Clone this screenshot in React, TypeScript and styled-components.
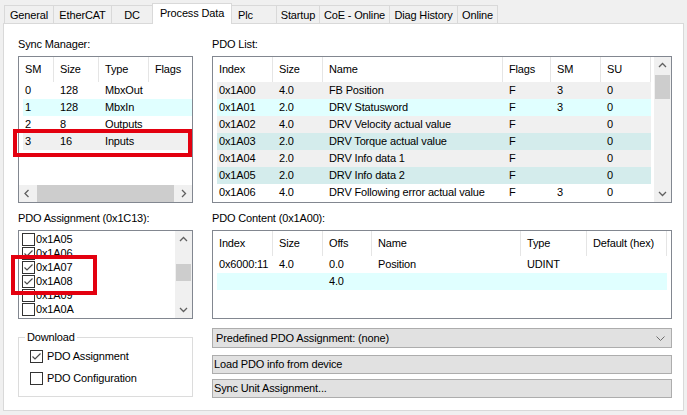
import React from "react";
import styled, { createGlobalStyle } from "styled-components";

const GlobalStyle = createGlobalStyle`
  * { box-sizing: border-box; }
  html, body { margin: 0; padding: 0; background: #f0f0f0; }
  body {
    font-family: "Liberation Sans", Arial, sans-serif;
    font-size: 11px;
    letter-spacing: -0.15px;
    color: #000;
  }
`;

const Window = styled.div`
  width: 687px;
  height: 415px;
  padding: 3px 0 0 3px;
  overflow: hidden;
`;

const Frame = styled.div`
  width: 681px;
`;

const TabStrip = styled.div`
  display: flex;
  align-items: flex-end;
  height: 21px;
  padding-left: 1px;
  border-bottom: 1px solid #d9d9d9;
`;

const Tab = styled.div<{ $w: number; $active?: boolean; $left?: boolean }>`
  width: ${(p) => p.$w}px;
  height: ${(p) => (p.$active ? 21 : 18)}px;
  margin-bottom: ${(p) => (p.$active ? -1 : 0)}px;
  border: 1px solid #d9d9d9;
  border-bottom: none;
  background: ${(p) => (p.$active ? "#fff" : "#f0f0f0")};
  line-height: ${(p) => (p.$active ? 19 : 18)}px;
  text-align: ${(p) => (p.$left ? "left" : "center")};
  padding-left: ${(p) => (p.$left ? 6 : 0)}px;
  white-space: nowrap;
  position: relative;
  z-index: ${(p) => (p.$active ? 1 : 0)};
  & + & {
    margin-left: -1px;
  }
`;

const Panel = styled.div`
  height: 387px;
  border: 1px solid #d9d9d9;
  border-top: none;
  background: #fff;
  padding: 14px 0 0 14px;
  display: grid;
  grid-template-columns: 175px 460px;
  column-gap: 19px;
  align-items: start;
`;

const Column = styled.div`
  display: flex;
  flex-direction: column;
`;

const Label = styled.div<{ $top?: number }>`
  height: 18px;
  line-height: 13px;
  margin-top: ${(p) => p.$top ?? 0}px;
  white-space: nowrap;
`;

const Holder = styled.div`
  position: relative;
`;

const ListBox = styled.div<{ $h: number }>`
  height: ${(p) => p.$h}px;
  border: 1px solid #828790;
  background: #fff;
  display: flex;
  overflow: hidden;
`;

const ListMain = styled.div`
  flex: 1;
  min-width: 0;
  display: flex;
  flex-direction: column;
  overflow: hidden;
`;

const ListRows = styled.div<{ $pad?: number }>`
  flex: 1;
  overflow: hidden;
  padding-top: ${(p) => p.$pad ?? 0}px;
`;

const HeaderRow = styled.div<{ $cols: string }>`
  display: grid;
  grid-template-columns: ${(p) => p.$cols};
  width: max-content;
  margin-left: 4px;
  height: 25px;
  flex-shrink: 0;
`;

const HeadCell = styled.div`
  border-right: 1px solid #e5e5e5;
  padding-left: 6px;
  line-height: 25px;
  white-space: nowrap;
  overflow: hidden;
  &:first-child {
    padding-left: 2px;
  }
`;

const Row = styled.div<{ $cols: string; $bg: string }>`
  display: grid;
  grid-template-columns: ${(p) => p.$cols};
  width: max-content;
  margin-left: 4px;
  height: 17px;
  line-height: 17px;
  background: ${(p) => p.$bg};
`;

const Cell = styled.div`
  padding-left: 6px;
  white-space: nowrap;
  overflow: hidden;
  &:first-child {
    padding-left: 2px;
  }
`;

const VScroll = styled.div`
  width: 17px;
  flex-shrink: 0;
  background: #f0f0f0;
  display: flex;
  flex-direction: column;
`;

const HScroll = styled.div`
  height: 17px;
  flex-shrink: 0;
  background: #f0f0f0;
  display: flex;
`;

const Arrow = styled.div`
  width: 17px;
  height: 17px;
  flex-shrink: 0;
  display: flex;
  align-items: center;
  justify-content: center;
`;

const Track = styled.div<{ $vertical?: boolean }>`
  flex: 1;
  display: flex;
  flex-direction: ${(p) => (p.$vertical ? "column" : "row")};
`;

const Thumb = styled.div<{ $vertical?: boolean; $at: number; $len: number }>`
  background: #cdcdcd;
  flex-shrink: 0;
  ${(p) =>
    p.$vertical
      ? `margin: ${p.$at}px 1px 0; height: ${p.$len}px;`
      : `margin: 0 0 0 ${p.$at}px; width: ${p.$len}px;`}
`;

const Marker = styled.div<{ $x: number; $y: number; $w: number; $h: number }>`
  position: absolute;
  left: ${(p) => p.$x}px;
  top: ${(p) => p.$y}px;
  width: ${(p) => p.$w}px;
  height: ${(p) => p.$h}px;
  border: 4px solid #e3000f;
  pointer-events: none;
`;

const CheckItem = styled.div`
  display: flex;
  align-items: center;
  gap: 1px;
  height: 14px;
  line-height: 14px;
  padding-left: 3px;
  white-space: nowrap;
  svg {
    flex-shrink: 0;
  }
`;

const Group = styled.fieldset`
  margin: 12px 0 0;
  padding: 0 0 0 6px;
  min-width: 0;
  height: 66px;
  border: 1px solid #dcdcdc;
`;

const Legend = styled.legend`
  padding: 0 2px;
  line-height: 13px;
`;

const GroupBody = styled.div`
  padding-top: 1px;
`;

const OptionRow = styled.div`
  display: flex;
  align-items: center;
  gap: 4px;
  height: 22px;
  margin-left: 5px;
  svg {
    flex-shrink: 0;
  }
`;

const Combo = styled.div`
  margin-top: 9px;
  height: 20px;
  background: #e1e1e1;
  border: 1px solid #adadad;
  display: flex;
  align-items: center;
  justify-content: space-between;
  padding: 0 6px 0 3px;
`;

const Button = styled.div<{ $top: number }>`
  margin-top: ${(p) => p.$top}px;
  height: 19px;
  line-height: 17px;
  background: #e1e1e1;
  border: 1px solid #adadad;
  padding-left: 1px;
`;

type Dir = "up" | "down" | "left" | "right";
const chevronPaths: Record<Dir, string> = {
  up: "M1 6 L4.5 2.5 L8 6",
  down: "M1 3 L4.5 6.5 L8 3",
  left: "M5.5 1 L2 4.5 L5.5 8",
  right: "M3 1 L6.5 4.5 L3 8",
};

const Chevron = ({ dir }: { dir: Dir }) => (
  <svg width="9" height="9" viewBox="0 0 9 9">
    <path d={chevronPaths[dir]} fill="none" stroke="#606060" strokeWidth="1.3" />
  </svg>
);

const CheckBox = ({ checked }: { checked?: boolean }) => (
  <svg width="13" height="13" viewBox="0 0 13 13">
    <rect x="0.5" y="0.5" width="12" height="12" fill="#fff" stroke="#333" />
    {checked && <path d="M2.5 6.5 L5 9 L10.5 3.5" fill="none" stroke="#4a4a4a" strokeWidth="1.2" />}
  </svg>
);

const cols = (c: number[]) => c.map((n) => `${n}px`).join(" ");

const tabs = [
  { label: "General", w: 50 },
  { label: "EtherCAT", w: 59 },
  { label: "DC", w: 42 },
  { label: "Process Data", w: 80, active: true },
  { label: "Plc", w: 46, left: true },
  { label: "Startup", w: 44 },
  { label: "CoE - Online", w: 71 },
  { label: "Diag History", w: 69 },
  { label: "Online", w: 41 },
];

const WHITE = "#fff";
const GREY = "#f0f0f0";
const CYAN = "#e0ffff";
const TEAL = "#d4ecec";

const syncCols = cols([31, 45, 50, 60]);
const syncHead = ["SM", "Size", "Type", "Flags"];
const syncRows = [
  { bg: WHITE, cells: ["0", "128", "MbxOut", ""] },
  { bg: CYAN, cells: ["1", "128", "MbxIn", ""] },
  { bg: WHITE, cells: ["2", "8", "Outputs", ""] },
  { bg: GREY, cells: ["3", "16", "Inputs", ""] },
];

const listCols = cols([56, 50, 180, 48, 50, 50]);
const listHead = ["Index", "Size", "Name", "Flags", "SM", "SU"];
const listRows = [
  { bg: GREY, cells: ["0x1A00", "4.0", "FB Position", "F", "3", "0"] },
  { bg: CYAN, cells: ["0x1A01", "2.0", "DRV Statusword", "F", "3", "0"] },
  { bg: GREY, cells: ["0x1A02", "4.0", "DRV Velocity actual value", "F", "", "0"] },
  { bg: TEAL, cells: ["0x1A03", "2.0", "DRV Torque actual value", "F", "", "0"] },
  { bg: GREY, cells: ["0x1A04", "2.0", "DRV Info data 1", "F", "", "0"] },
  { bg: TEAL, cells: ["0x1A05", "2.0", "DRV Info data 2", "F", "", "0"] },
  { bg: WHITE, cells: ["0x1A06", "4.0", "DRV Following error actual value", "F", "3", "0"] },
];

const contentCols = cols([56, 50, 49, 149, 66, 80]);
const contentHead = ["Index", "Size", "Offs", "Name", "Type", "Default (hex)"];
const contentRows = [
  { bg: WHITE, cells: ["0x6000:11", "4.0", "0.0", "Position", "UDINT", ""] },
  { bg: CYAN, cells: ["", "", "4.0", "", "", ""] },
];

const assignments = [
  { id: "0x1A05", on: false },
  { id: "0x1A06", on: true },
  { id: "0x1A07", on: true },
  { id: "0x1A08", on: true },
  { id: "0x1A09", on: false },
  { id: "0x1A0A", on: false },
];

type TableRow = { bg: string; cells: string[] };

const Table = ({ template, head, rows }: { template: string; head: string[]; rows: TableRow[] }) => (
  <>
    <HeaderRow $cols={template}>
      {head.map((h) => (
        <HeadCell key={h}>{h}</HeadCell>
      ))}
    </HeaderRow>
    <ListRows>
      {rows.map((r, i) => (
        <Row key={i} $cols={template} $bg={r.bg}>
          {r.cells.map((c, j) => (
            <Cell key={j}>{c}</Cell>
          ))}
        </Row>
      ))}
    </ListRows>
  </>
);

const VerticalBar = ({ at, len }: { at: number; len: number }) => (
  <VScroll>
    <Arrow>
      <Chevron dir="up" />
    </Arrow>
    <Track $vertical>
      <Thumb $vertical $at={at} $len={len} />
    </Track>
    <Arrow>
      <Chevron dir="down" />
    </Arrow>
  </VScroll>
);

export default function App() {
  return (
    <Window>
      <GlobalStyle />
      <Frame>
        <TabStrip>
          {tabs.map((t) => (
            <Tab key={t.label} $w={t.w} $active={t.active} $left={t.left}>
              {t.label}
            </Tab>
          ))}
        </TabStrip>
        <Panel>
          <Column>
            <Label>Sync Manager:</Label>
            <Holder>
              <ListBox $h={147}>
                <ListMain>
                  <Table template={syncCols} head={syncHead} rows={syncRows} />
                  <HScroll>
                    <Arrow>
                      <Chevron dir="left" />
                    </Arrow>
                    <Track>
                      <Thumb $at={1} $len={137} />
                    </Track>
                    <Arrow>
                      <Chevron dir="right" />
                    </Arrow>
                  </HScroll>
                </ListMain>
              </ListBox>
              <Marker $x={-5} $y={73} $w={179} $h={28} />
            </Holder>

            <Label $top={9}>PDO Assignment (0x1C13):</Label>
            <Holder>
              <ListBox $h={89}>
                <ListMain>
                  <ListRows $pad={1}>
                    {assignments.map((a) => (
                      <CheckItem key={a.id}>
                        <CheckBox checked={a.on} />
                        {a.id}
                      </CheckItem>
                    ))}
                  </ListRows>
                </ListMain>
                <VerticalBar at={16} len={17} />
              </ListBox>
              <Marker $x={-7} $y={25} $w={86} $h={40} />
            </Holder>

            <Group>
              <Legend>Download</Legend>
              <GroupBody>
                <OptionRow>
                  <CheckBox checked />
                  PDO Assignment
                </OptionRow>
                <OptionRow>
                  <CheckBox />
                  PDO Configuration
                </OptionRow>
              </GroupBody>
            </Group>
          </Column>

          <Column>
            <Label>PDO List:</Label>
            <ListBox $h={147}>
              <ListMain>
                <Table template={listCols} head={listHead} rows={listRows} />
              </ListMain>
              <VerticalBar at={1} len={24} />
            </ListBox>

            <Label $top={9}>PDO Content (0x1A00):</Label>
            <ListBox $h={89}>
              <ListMain>
                <Table template={contentCols} head={contentHead} rows={contentRows} />
              </ListMain>
            </ListBox>

            <Combo>
              <span>Predefined PDO Assignment: (none)</span>
              <svg width="9" height="5" viewBox="0 0 9 5">
                <path d="M0.5 0.5 L4.5 4.5 L8.5 0.5" fill="none" stroke="#6d6d6d" strokeWidth="1" />
              </svg>
            </Combo>
            <Button $top={7}>Load PDO info from device</Button>
            <Button $top={5}>Sync Unit Assignment...</Button>
          </Column>
        </Panel>
      </Frame>
    </Window>
  );
}
